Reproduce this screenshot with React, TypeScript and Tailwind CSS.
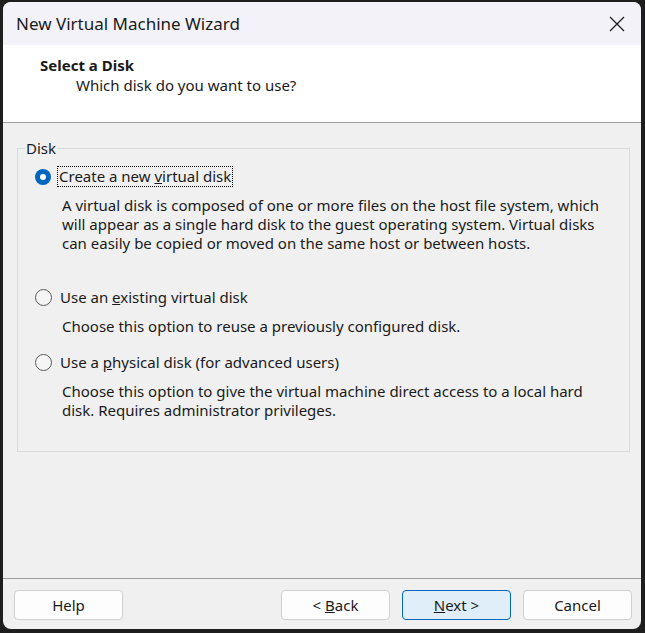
import React from 'react';

const font = { fontFamily: '"Noto Sans", "Open Sans", sans-serif' };

interface DiskOptionProps {
  checked?: boolean;
  focused?: boolean;
  label: React.ReactNode;
  children: React.ReactNode;
}

const Radio: React.FC<{ checked?: boolean }> = ({ checked }) =>
  checked ? (
    <span className="flex h-[16px] w-[16px] items-center justify-center rounded-full bg-[#0067c0]">
      <span className="h-[6px] w-[6px] rounded-full bg-white" />
    </span>
  ) : (
    <span className="h-[17px] w-[17px] rounded-full border border-[#5a5a5a] bg-[#f5f5f5]" />
  );

const DiskOption: React.FC<DiskOptionProps> = ({ checked, focused, label, children }) => (
  <div>
    <div className="flex items-center gap-[7px]">
      <Radio checked={checked} />
      <span className={`px-[1px] leading-[19px] ${focused ? 'outline outline-1 outline-dotted outline-black' : ''}`}>
        {label}
      </span>
    </div>
    <p className="mt-[10px] whitespace-nowrap pl-[27px] leading-[19px]">{children}</p>
  </div>
);

const btn = 'h-[30px] w-[109px] rounded-[4px] border';

export default function App() {
  return (
    <div className="h-[633px] w-[645px] bg-[#1e1e1e] pb-[4px] pl-[3px] pr-[4px] pt-[2px]" style={font}>
      <div className="flex h-full flex-col overflow-hidden rounded-lg bg-[#f0f0f0] text-[15px] text-[#1a1a1a]">
        {/* title bar */}
        <div className="flex h-[43px] shrink-0 items-center justify-between bg-[#f3f2f8] pl-[13px] pr-[14px]">
          <span className="text-[17px] text-[#1a1a1a]">New Virtual Machine Wizard</span>
          <svg width="16" height="16" viewBox="0 0 16 16" className="mr-[2px]">
            <path d="M1 1 L15 15 M15 1 L1 15" stroke="#1a1a1a" strokeWidth="1.2" fill="none" />
          </svg>
        </div>

        {/* header */}
        <div className="h-[78px] shrink-0 border-b border-[#a0a0a0] bg-white pl-[37px] pt-[10px]">
          <div className="text-[15px] font-bold leading-[20px]">Select a Disk</div>
          <div className="pl-[36px] leading-[20px]">Which disk do you want to use?</div>
        </div>

        {/* body */}
        <div className="flex-1 pl-[14px] pr-[11px] pt-[16px]">
          <fieldset className="h-[313px] border border-[#dcdcdc]">
            <legend className="ml-[7px] px-[1px] leading-[18px]">Disk</legend>
            <div className="flex flex-col gap-[26px] pl-[17px] pr-[10px] pt-[10px]">
              <DiskOption
                checked
                focused
                label={<>Create a new <u>v</u>irtual disk</>}
              >
                A virtual disk is composed of one or more files on the host file system, which
                <br />
                will appear as a single hard disk to the guest operating system. Virtual disks
                <br />
                can easily be copied or moved on the same host or between hosts.
              </DiskOption>
              <div className="flex flex-col gap-[17px] pt-[9px]">
                <DiskOption label={<>Use an <u>e</u>xisting virtual disk</>}>
                  Choose this option to reuse a previously configured disk.
                </DiskOption>
                <DiskOption label={<>Use a <u>p</u>hysical disk (for advanced users)</>}>
                  Choose this option to give the virtual machine direct access to a local hard
                  <br />
                  disk. Requires administrator privileges.
                </DiskOption>
              </div>
            </div>
          </fieldset>
        </div>

        {/* footer */}
        <div className="flex h-[51px] shrink-0 items-start border-t border-[#a0a0a0] pl-[11px] pr-[9px] pt-[11px]">
          <button className={`${btn} border-[#d0d0d0] bg-[#fdfdfd]`}>Help</button>
          <div className="ml-auto flex gap-[12px]">
            <button className={`${btn} border-[#d0d0d0] bg-[#fdfdfd]`}>
              &lt; <u>B</u>ack
            </button>
            <button className={`${btn} border-[#0067c0] bg-[#e0eef9]`}>
              <u>N</u>ext &gt;
            </button>
            <button className={`${btn} border-[#d0d0d0] bg-[#fdfdfd]`}>Cancel</button>
          </div>
        </div>
      </div>
    </div>
  );
}
